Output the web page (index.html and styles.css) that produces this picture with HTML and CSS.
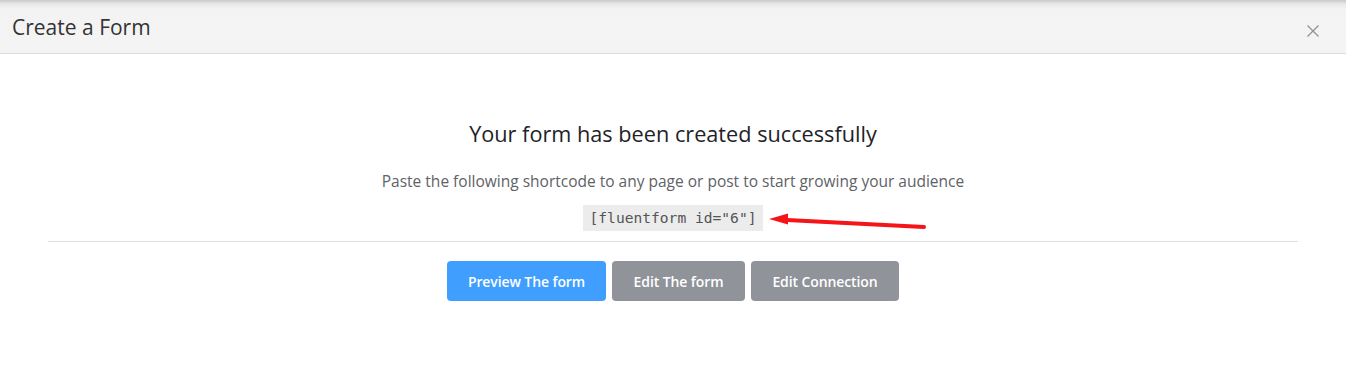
FILE: index.html
```html
<!DOCTYPE html>
<html lang="en">
<head>
  <meta charset="UTF-8" />
  <title>Create a Form</title>
  <link rel="stylesheet" href="styles.css">
</head>
<body>
  <div class="modal">
    <header class="modal-header">
      <span class="modal-title">Create a Form</span>
      <button class="modal-close" aria-label="Close">
        <svg width="12" height="12" viewBox="0 0 12 12"><path d="M0.5 0.5 L11.5 11.5 M11.5 0.5 L0.5 11.5" stroke="#909399" stroke-width="1.3" fill="none"/></svg>
      </button>
    </header>
    <div class="modal-body">
      <h3 class="success-title">Your form has been created successfully</h3>
      <p class="success-text">Paste the following shortcode to any page or post to start growing your audience</p>
      <div class="shortcode-row">
        <code class="shortcode">[fluentform id="6"]</code>
        <svg class="arrow" width="170" height="20" viewBox="0 0 170 20">
          <path d="M18 7 L155 14" stroke="#f5141a" stroke-width="4" stroke-linecap="round" fill="none"/>
          <path d="M0 6 L19 0.5 L19 11.5 Z" fill="#f5141a"/>
        </svg>
      </div>
      <hr class="divider" />
      <div class="actions">
        <button class="btn btn-primary">Preview The form</button>
        <button class="btn btn-info">Edit The form</button>
        <button class="btn btn-info">Edit Connection</button>
      </div>
    </div>
  </div>
</body>
</html>
```

FILE: styles.css
```css
body {
  margin: 0;
  background: #fff;
  font-family: 'Open Sans', 'Noto Sans', sans-serif;
}
.modal {
  width: 1346px;
  height: 366px;
  background: #fff;
}
.modal-header {
  height: 53px;
  display: flex;
  align-items: center;
  justify-content: space-between;
  padding: 0 26px 0 12px;
  background: linear-gradient(to bottom, #c9c9c9 0, #e8e8e8 4px, #f3f3f3 9px, #f4f4f4 100%);
  border-bottom: 1px solid #dcdcdc;
}
.modal-title {
  font-size: 21px;
  color: #333;
  margin-top: 1px;
}
.modal-close {
  border: none;
  background: none;
  padding: 0;
  margin-top: 8px;
  width: 14px;
  height: 14px;
  display: flex;
  align-items: center;
  justify-content: center;
  cursor: pointer;
}
.modal-body {
  padding: 66px 48px 0;
  text-align: center;
}
.success-title {
  margin: 0;
  font-size: 21.7px;
  font-weight: 500;
  color: #1f2329;
  line-height: 28px;
}
.success-text {
  margin: 22px 0 0;
  font-size: 15.5px;
  color: #606266;
  line-height: 22px;
}
.shortcode-row {
  position: relative;
  display: inline-block;
  margin-top: 13px;
}
.shortcode {
  display: inline-block;
  background: #ececec;
  color: #555;
  font-family: 'DejaVu Sans Mono', monospace;
  font-size: 14.6px;
  line-height: 26px;
  padding: 0 7px;
}
.arrow {
  position: absolute;
  left: 186px;
  top: 8px;
}
.divider {
  border: none;
  border-top: 1px solid #dcdfe6;
  margin: 10px 0 19px;
}
.actions {
  display: flex;
  justify-content: center;
  gap: 6px;
}
.btn {
  height: 40px;
  border: none;
  border-radius: 4px;
  color: #fff;
  font-family: 'Open Sans', sans-serif;
  font-size: 14px;
  font-weight: 600;
  padding: 0 16px;
  letter-spacing: -0.1px;
  cursor: pointer;
}
.btn-primary {
  background: #409eff;
  width: 159px;
}
.btn-info {
  background: #909399;
}
.actions .btn-info:nth-child(2) {
  width: 133px;
}
.actions .btn-info:nth-child(3) {
  width: 148px;
}
```
